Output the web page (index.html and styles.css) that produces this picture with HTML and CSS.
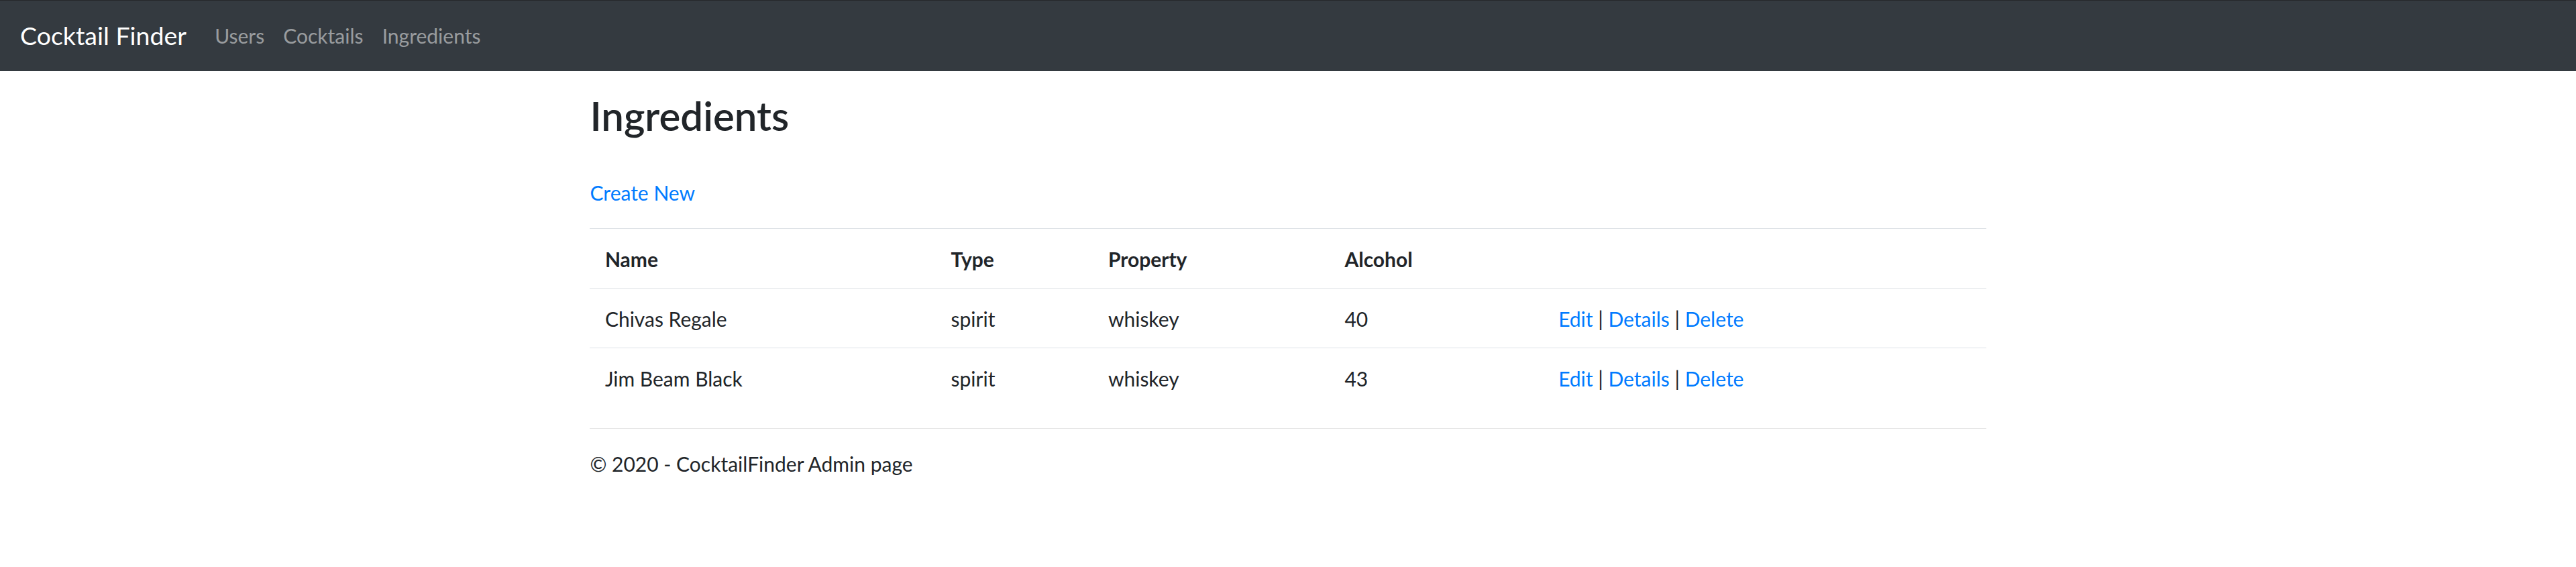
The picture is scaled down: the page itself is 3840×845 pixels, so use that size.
FILE: index.html
```html
<!DOCTYPE html>
<html lang="en">
<head>
<meta charset="utf-8">
<title>Ingredients - Cocktail Finder</title>
<link rel="stylesheet" href="styles.css">
</head>
<body>
<nav class="navbar">
  <a class="brand" href="#">Cocktail Finder</a>
  <ul class="nav-links">
    <li><a class="nav-link" href="#">Users</a></li>
    <li><a class="nav-link" href="#">Cocktails</a></li>
    <li><a class="nav-link" href="#">Ingredients</a></li>
  </ul>
</nav>
<div class="container">
  <main class="main">
    <h1 class="page-title">Ingredients</h1>
    <p class="create"><a href="#">Create New</a></p>
    <table class="table">
      <colgroup>
        <col class="col-name">
        <col class="col-type">
        <col class="col-prop">
        <col class="col-alc">
        <col class="col-act">
      </colgroup>
      <thead>
        <tr><th>Name</th><th>Type</th><th>Property</th><th>Alcohol</th><th></th></tr>
      </thead>
      <tbody>
        <tr>
          <td>Chivas Regale</td><td>spirit</td><td>whiskey</td><td>40</td>
          <td><a href="#">Edit</a> | <a href="#">Details</a> | <a href="#">Delete</a></td>
        </tr>
        <tr>
          <td>Jim Beam Black</td><td>spirit</td><td>whiskey</td><td>43</td>
          <td><a href="#">Edit</a> | <a href="#">Details</a> | <a href="#">Delete</a></td>
        </tr>
      </tbody>
    </table>
  </main>
  <footer class="footer">&copy; 2020 - CocktailFinder Admin page</footer>
</div>
</body>
</html>
```
FILE: styles.css
```css
html {
  zoom: 1.875;
}
body {
  margin: 0;
  font-family: Lato, "Open Sans", sans-serif;
  font-size: 16px;
  line-height: 1.5;
  color: #212529;
  background: #fff;
}
a {
  color: #007bff;
  text-decoration: none;
}
.navbar {
  display: flex;
  align-items: center;
  background: #343a40;
  border-top: 1px solid #25282b;
  padding: 8px 16px;
  margin-bottom: 16px;
}
.brand {
  color: #fff;
  font-size: 20px;
  line-height: 30px;
  padding: 5px 0;
  margin-right: 15px;
}
.nav-links {
  display: flex;
  list-style: none;
  margin: 0;
  padding: 0;
}
.nav-link {
  display: block;
  padding: 8px 7.5px;
  color: rgba(255, 255, 255, 0.5);
}
.container {
  max-width: 1110px;
  padding: 0 15px;
  margin: 0 auto;
}
.page-title {
  font-size: 32px;
  font-weight: 600;
  line-height: 1.2;
  margin: 0 0 30.5px;
}
.create {
  margin: 0 0 16px;
}
.table {
  width: 100%;
  table-layout: fixed;
  border-collapse: collapse;
  margin-bottom: 16px;
}
.col-name { width: 275px; }
.col-type { width: 125px; }
.col-prop { width: 188px; }
.col-alc { width: 170px; }
.col-act { width: 352px; }
.table th,
.table td {
  padding: 12px 12px 11px;
  text-align: left;
  vertical-align: top;
  border-top: 1px solid #dee2e6;
}
.table th {
  font-weight: 700;
}
.footer {
  border-top: 1px solid #e5e5e5;
  padding-top: 16px;
  white-space: nowrap;
}
```
